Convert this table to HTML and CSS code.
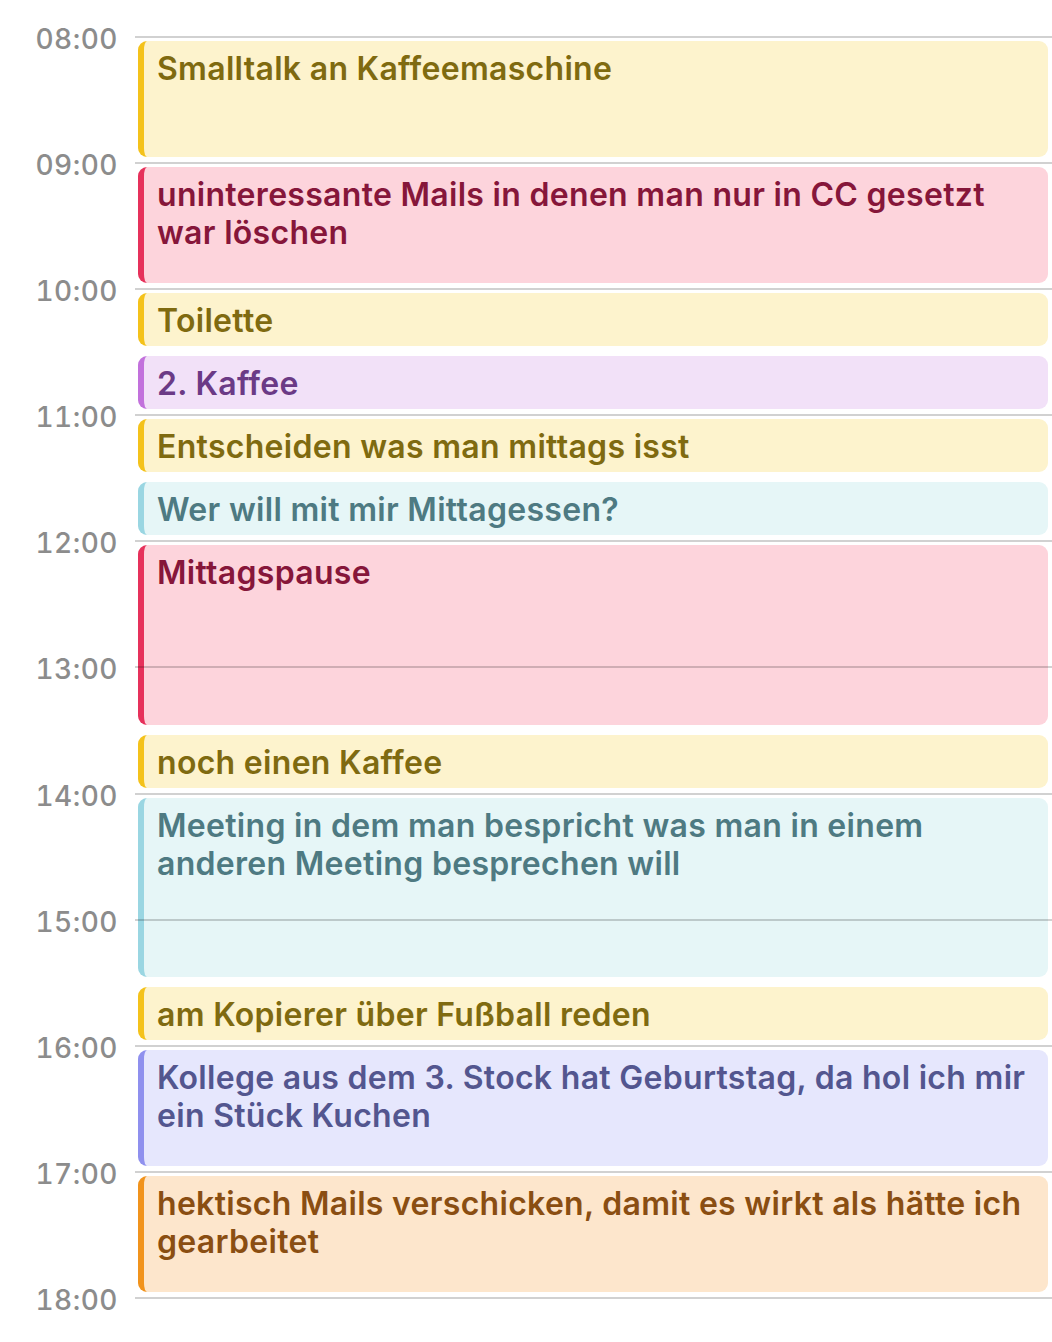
FILE: index.html
```html
<!DOCTYPE html>
<html lang="de">
<head>
    <meta charset="UTF-8">
    <meta name="viewport" content="width=device-width, initial-scale=1.0">
    <title>Kalender - Arbeitstag</title>
    <link rel="stylesheet" href="styles.css">
</head>
<body>
    <div class="day">
        <!-- time labels -->
        <div class="time" style="grid-row: 2">08:00</div>
        <div class="time" style="grid-row: 4">09:00</div>
        <div class="time" style="grid-row: 6">10:00</div>
        <div class="time" style="grid-row: 8">11:00</div>
        <div class="time" style="grid-row: 10">12:00</div>
        <div class="time" style="grid-row: 12">13:00</div>
        <div class="time" style="grid-row: 14">14:00</div>
        <div class="time" style="grid-row: 16">15:00</div>
        <div class="time" style="grid-row: 18">16:00</div>
        <div class="time" style="grid-row: 20">17:00</div>
        <div class="time" style="grid-row: 22">18:00</div>

        <!-- events -->
        <div class="event yellow" style="grid-row: 2 / 4">Smalltalk an Kaffeemaschine</div>
        <div class="event pink" style="grid-row: 4 / 6">uninteressante Mails in denen man nur in CC gesetzt<br>war löschen</div>
        <div class="event yellow" style="grid-row: 6 / 7">Toilette</div>
        <div class="event purple" style="grid-row: 7 / 8">2. Kaffee</div>
        <div class="event yellow" style="grid-row: 8 / 9">Entscheiden was man mittags isst</div>
        <div class="event cyan" style="grid-row: 9 / 10">Wer will mit mir Mittagessen?</div>
        <div class="event pink" style="grid-row: 10 / 13">Mittagspause</div>
        <div class="event yellow" style="grid-row: 13 / 14">noch einen Kaffee</div>
        <div class="event cyan" style="grid-row: 14 / 17">Meeting in dem man bespricht was man in einem<br>anderen Meeting besprechen will</div>
        <div class="event yellow" style="grid-row: 17 / 18">am Kopierer über Fußball reden</div>
        <div class="event lavender" style="grid-row: 18 / 20">Kollege aus dem 3. Stock hat Geburtstag, da hol ich mir<br>ein Stück Kuchen</div>
        <div class="event orange" style="grid-row: 20 / 22">hektisch Mails verschicken, damit es wirkt als hätte ich<br>gearbeitet</div>

        <!-- hour lines -->
        <div class="line" style="grid-row: 2"></div>
        <div class="line" style="grid-row: 4"></div>
        <div class="line" style="grid-row: 6"></div>
        <div class="line" style="grid-row: 8"></div>
        <div class="line" style="grid-row: 10"></div>
        <div class="line" style="grid-row: 12"></div>
        <div class="line" style="grid-row: 14"></div>
        <div class="line" style="grid-row: 16"></div>
        <div class="line" style="grid-row: 18"></div>
        <div class="line" style="grid-row: 20"></div>
        <div class="line" style="grid-row: 22"></div>
    </div>
</body>
</html>
```

FILE: styles.css
```css
body {
    margin: 0;
    background: #ffffff;
    font-family: "Inter", "Noto Sans", sans-serif;
}

/* day grid: one row per half hour */
.day {
    display: grid;
    grid-template-columns: 135px 1fr;
    grid-template-rows: 36px repeat(20, 63.05px) 45px;
}

.time {
    grid-column: 1;
    align-self: start;
    margin-top: -13px;
    padding-right: 17px;
    text-align: right;
    font-size: 28px;
    font-weight: 500;
    letter-spacing: 0.5px;
    font-variant-numeric: tabular-nums;
    line-height: 32px;
    color: #8c8c8c;
}

.line {
    grid-column: 2;
    align-self: start;
    z-index: 1;
    border-top: 2px solid rgba(0, 0, 0, 0.18);
}

/* events */
.event {
    grid-column: 2;
    margin: 5px 4px 5px 3px;
    padding: 9px 12px 0 13px;
    border-left: 6px solid;
    border-radius: 9px;
    font-size: 32px;
    font-weight: 600;
    letter-spacing: 0.3px;
    line-height: 38px;
    white-space: nowrap;
    overflow: hidden;
}

.yellow {
    background: #fdf3cd;
    border-color: #f4c21b;
    color: #7f6a10;
}

.pink {
    background: #fdd4dc;
    border-color: #e6315b;
    color: #86163a;
}

.purple {
    background: #f2e1f8;
    border-color: #c271dc;
    color: #6b3a86;
}

.cyan {
    background: #e6f6f7;
    border-color: #9ad6e2;
    color: #4e7a82;
}

.lavender {
    background: #e6e7fd;
    border-color: #8f90ee;
    color: #53568f;
}

.orange {
    background: #fde6cc;
    border-color: #f1931c;
    color: #8a4e12;
}
```
